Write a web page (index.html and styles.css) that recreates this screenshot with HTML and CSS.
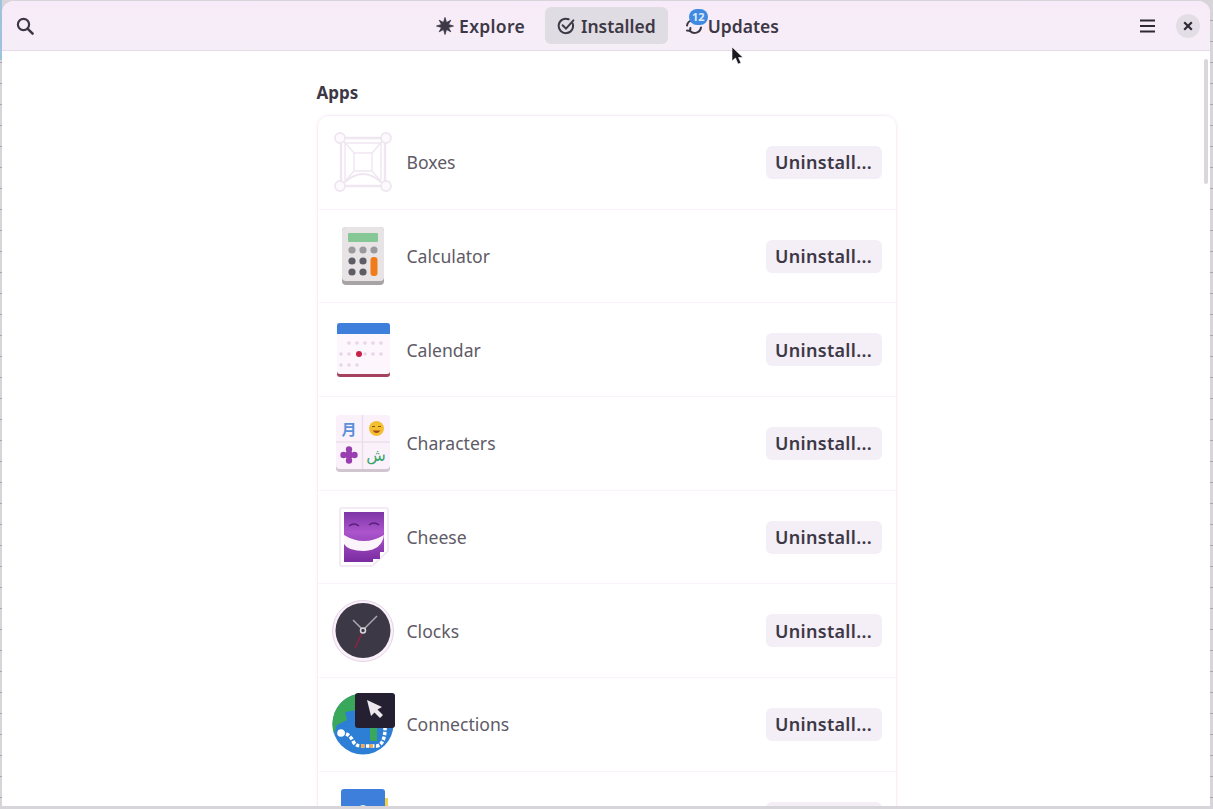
FILE: index.html
```html
<!DOCTYPE html>
<html lang="en">
<head>
    <meta charset="UTF-8">
    <meta name="viewport" content="width=device-width, initial-scale=1.0">
    <title>Software</title>
    <link rel="stylesheet" href="styles.css">
</head>
<body>
    <div class="window">
        <header class="headerbar">
            <div class="header-start">
                <svg class="icon-search" width="20" height="20" viewBox="0 0 20 20"><circle cx="8.5" cy="8.5" r="5.6" fill="none" stroke="#3d3846" stroke-width="2.2"/><path d="M12.8 12.8 17.6 17.6" stroke="#3d3846" stroke-width="2.6" stroke-linecap="round"/></svg>
            </div>
            <nav class="switcher">
                <div class="tab tab-explore">
                    <svg width="18" height="18" viewBox="0 0 18 18"><path d="M9 0.500 10.500 5.500 14.800 3.200 12.500 7.500 17.500 9 12.500 10.500 14.800 14.800 10.500 12.500 9 17.500 7.500 12.500 3.200 14.800 5.500 10.500 0.500 9 5.500 7.500 3.200 3.200 7.500 5.500Z" fill="#3d3846" stroke="#3d3846" stroke-width="0.800" stroke-linejoin="round"/></svg>
                    <span>Explore</span>
                </div>
                <div class="tab tab-active">
                    <svg width="18" height="18" viewBox="0 0 18 18" fill="none" stroke="#3d3846" stroke-width="2" stroke-linecap="round"><path d="M15.6 6.4A7.2 7.2 0 1 1 11.6 2.3"/><path d="M5.6 8.2 9 11.6 16.4 3.4"/></svg>
                    <span>Installed</span>
                </div>
                <div class="tab tab-updates">
                    <svg width="18" height="18" viewBox="0 0 18 18" fill="none" stroke="#3d3846" stroke-width="2" stroke-linecap="round"><path d="M2 8.5A6.5 6.5 0 0 1 13 5"/><path d="M16 10.5A6.5 6.5 0 0 1 5 14"/><path d="M2 13.6 5 14 5.4 11"/></svg>
                    <span>Updates</span>
                    <span class="badge">12</span>
                </div>
            </nav>
            <div class="header-end">
                <svg width="16" height="14" viewBox="0 0 16 14"><path d="M0 1.5H15M0 7H15M0 12.5H15" stroke="#2e2a35" stroke-width="2"/></svg>
                <button class="close">
                    <svg width="10" height="10" viewBox="0 0 10 10"><path d="M1.2 1.2 8.8 8.8M8.8 1.2 1.2 8.8" stroke="#2e2a35" stroke-width="2.2"/></svg>
                </button>
            </div>
        </header>
        <main class="content">
            <div class="scrollbar"></div>
            <section class="column">
                <h2>Apps</h2>
                <div class="list">
                    <div class="row">
                        <svg class="app-icon" width="64" height="64" viewBox="0 0 64 64" fill="none" stroke="#f0e6f2" stroke-width="1.4">
                            <path d="M10 8H54V56H10Z" stroke-width="2.400"/>
                            <path d="M14 13H50M14 13V50M50 13V50"/>
                            <path d="M23 23H41V41H23Z"/>
                            <path d="M10 8 23 23M54 8 41 23M10 56 23 41M54 56 41 41"/>
                            <path d="M14 52Q32 36 50 52" stroke-width="2"/>
                            <g fill="#fdfafd" stroke-width="1.800"><circle cx="9" cy="8" r="5"/><circle cx="55" cy="8" r="5"/><circle cx="9" cy="56" r="5"/><circle cx="55" cy="56" r="5"/></g>
                        </svg>
                        <span class="app-name">Boxes</span>
                        <button class="uninstall">Uninstall...</button>
                    </div>
                    <div class="row">
                        <svg class="app-icon" width="64" height="64" viewBox="0 0 64 64">
                            <rect x="11" y="3" width="42" height="58" rx="4" fill="#a8a4a6"/>
                            <rect x="11" y="3" width="42" height="54" rx="4" fill="#e8e4e6"/>
                            <rect x="17" y="9" width="30" height="9" rx="1" fill="#85c795"/>
                            <g fill="#9a9a9e"><circle cx="21" cy="26" r="3.6"/><circle cx="32" cy="26" r="3.6"/><circle cx="43" cy="26" r="3.6"/></g>
                            <g fill="#5e5c64"><circle cx="21" cy="37" r="3.6"/><circle cx="32" cy="37" r="3.6"/><circle cx="21" cy="48" r="3.6"/><circle cx="32" cy="48" r="3.6"/></g>
                            <rect x="39.500" y="33" width="7" height="19" rx="3" fill="#f07c1a"/>
                        </svg>
                        <span class="app-name">Calculator</span>
                        <button class="uninstall">Uninstall...</button>
                    </div>
                    <div class="row">
                        <svg class="app-icon" width="64" height="64" viewBox="0 0 64 64">
                            <rect x="6" y="5" width="53" height="54" rx="3" fill="#a5405f"/>
                            <rect x="6" y="5" width="53" height="51" rx="3" fill="#fdf6fc"/>
                            <path d="M6 16V8A3 3 0 0 1 9 5H56A3 3 0 0 1 59 8V16Z" fill="#3f7fdc"/>
                            <g fill="#e6d6e6"><circle cx="18" cy="25" r="1.800"/><circle cx="26" cy="25" r="1.800"/><circle cx="34" cy="25" r="1.800"/><circle cx="42" cy="25" r="1.800"/><circle cx="50" cy="25" r="1.800"/><circle cx="10" cy="36" r="1.800"/><circle cx="18" cy="36" r="1.800"/><circle cx="34" cy="36" r="1.800"/><circle cx="42" cy="36" r="1.800"/><circle cx="50" cy="36" r="1.800"/><circle cx="10" cy="47" r="1.800"/><circle cx="18" cy="47" r="1.800"/><circle cx="26" cy="47" r="1.800"/></g>
                            <circle cx="28" cy="36" r="3" fill="#c9204a"/>
                        </svg>
                        <span class="app-name">Calendar</span>
                        <button class="uninstall">Uninstall...</button>
                    </div>
                    <div class="row">
                        <svg class="app-icon" width="64" height="64" viewBox="0 0 64 64">
                            <rect x="5" y="5" width="54" height="56" rx="4" fill="#cfc6cf"/>
                            <rect x="5" y="4" width="54" height="54" rx="4" fill="#fbf1fb"/>
                            <path d="M31.500 4V58M5 31H59" stroke="#e9dfe9" stroke-width="1.500"/>
                            <text x="18" y="24" text-anchor="middle" class="glyph-cjk">月</text>
                            <circle cx="45.500" cy="17.500" r="7.500" fill="#f3bf30"/>
                            <path d="M41 15.500H44M47 15.500H50" stroke="#7a5a10" stroke-width="1.200"/>
                            <path d="M41.500 19.500H49.500Q45.500 24.500 41.500 19.500Z" fill="#a5461c"/>
                            <g fill="#9a3fb0"><circle cx="18" cy="38.500" r="3.200"/><circle cx="18" cy="49.500" r="3.200"/><circle cx="12.500" cy="44" r="3.200"/><circle cx="23.500" cy="44" r="3.200"/><rect x="15" y="41" width="6" height="6"/></g>
                            <text x="45" y="50" text-anchor="middle" class="glyph-arabic">ش</text>
                        </svg>
                        <span class="app-name">Characters</span>
                        <button class="uninstall">Uninstall...</button>
                    </div>
                    <div class="row">
                        <svg class="app-icon" width="64" height="64" viewBox="0 0 64 64">
                            <defs><linearGradient id="cheeseFill" x1="0" y1="0" x2="0" y2="1"><stop offset="0" stop-color="#7d35a6"/><stop offset="0.4" stop-color="#ac55cc"/><stop offset="1" stop-color="#7a2ba0"/></linearGradient></defs>
                            <path d="M11 3H55A2 2 0 0 1 57 5V46L41 61H11A2 2 0 0 1 9 59V5A2 2 0 0 1 11 3Z" fill="#fff" stroke="#f0e4f2" stroke-width="1.500"/>
                            <path d="M13 7H53V47H49V54H42V57H13Z" fill="url(#cheeseFill)"/>
                            <path d="M13 30Q33 42 53 30 51 45 33 46 17 46 13 39Z" fill="#fbf4fb"/>
                            <path d="M18 21Q23 17 28 21M38 20Q43 16 48 20" fill="none" stroke="#58207c" stroke-width="1.500"/>
                        </svg>
                        <span class="app-name">Cheese</span>
                        <button class="uninstall">Uninstall...</button>
                    </div>
                    <div class="row">
                        <svg class="app-icon" width="64" height="64" viewBox="0 0 64 64">
                            <circle cx="32" cy="32" r="30.500" fill="#fbf1fb" stroke="#e5d3e6" stroke-width="1"/>
                            <circle cx="32" cy="31.500" r="27.500" fill="#3d3846"/>
                            <path d="M32 31 22 21M32 31 46 17" stroke="#aaa6ae" stroke-width="1.500"/>
                            <path d="M31.500 33 24 49" stroke="#8c2340" stroke-width="1.500"/>
                            <circle cx="32" cy="31.500" r="2.500" fill="#3d3846" stroke="#ddd8de" stroke-width="1.500"/>
                        </svg>
                        <span class="app-name">Clocks</span>
                        <button class="uninstall">Uninstall...</button>
                    </div>
                    <div class="row">
                        <svg class="app-icon" width="64" height="64" viewBox="0 0 64 64">
                            <circle cx="32" cy="32" r="30.500" fill="#2c7fd4"/>
                            <path d="M1.500 32A30.500 30.500 0 0 1 26 2V18L14 20 16 28 6 33 3 42A30.500 30.500 0 0 1 1.500 32Z" fill="#3aa85a"/>
                            <path d="M39 36H46V49H39Z" fill="#3aa85a"/>
                            <path d="M10 41Q18 41 22 49 24 54 30 54H46Q54 52 54 36" fill="none" stroke="#fff" stroke-width="3.500" stroke-dasharray="3.500 1.500"/>
                            <path d="M30 54H47" stroke="#f2a84a" stroke-width="3.500" stroke-dasharray="3.500 5"/>
                            <circle cx="10" cy="41" r="3.800" fill="#fff"/>
                            <rect x="24" y="1" width="40" height="35" rx="3" fill="#241f31"/>
                            <path d="M36 8 40 24 43.500 20.500 49 26 52 23 46.500 17.500 51 15Z" fill="#ece8ee"/>
                        </svg>
                        <span class="app-name">Connections</span>
                        <button class="uninstall">Uninstall...</button>
                    </div>
                    <div class="row">
                        <svg class="app-icon" width="64" height="64" viewBox="0 0 64 64">
                            <rect x="10" y="3" width="44" height="58" rx="3" fill="#3f7fdc"/>
                            <rect x="54" y="12" width="3" height="14" fill="#f3d24a"/>
                            <circle cx="32" cy="24" r="5" fill="#e6eefa"/>
                        </svg>
                        <span class="app-name"></span>
                        <button class="uninstall" aria-label="Uninstall"></button>
                    </div>
                </div>
            </section>
        </main>
    </div>
    <svg class="pointer" width="14" height="20" viewBox="0 0 14 20"><path d="M1 1V15L4.500 12 7 18 10 17 7.500 11.500H12Z" fill="#1b1a20" stroke="#fff" stroke-width="0.600"/></svg>
</body>
</html>
```

FILE: styles.css
```css
html, body {
    height: 100%;
}
body {
    margin: 0;
    overflow: hidden;
    font-family: "Noto Sans", "Open Sans", sans-serif;
    color: #3d3846;
    background-color: #d8d5da;
    background-image:
        linear-gradient(#9fc3dc, #9fc3dc),
        repeating-linear-gradient(180deg, transparent 0 20px, #aaa6ae 20px 21px);
    background-size: 2px 60px, auto;
    background-repeat: no-repeat, repeat;
}
.window {
    height: 805px;
    margin: 1px 3px 0 2px;
    display: flex;
    flex-direction: column;
    overflow: hidden;
    border-radius: 12px 12px 0 0;
    background-color: #fff;
}
.headerbar {
    flex: none;
    height: 49px;
    display: grid;
    grid-template-columns: 1fr auto 1fr;
    align-items: center;
    padding: 0 10px 0 13px;
    background: linear-gradient(180deg, #f8ebf9, #f5eef7);
    border-bottom: 1px solid #e4dbe6;
}
.icon-search {
    display: block;
}
.switcher {
    display: flex;
    align-items: center;
    gap: 6px;
}
.tab {
    position: relative;
    height: 37px;
    display: flex;
    align-items: center;
    gap: 6px;
    padding: 0 12px;
    border-radius: 6px;
    font-size: 17.5px;
    font-weight: 600;
    color: #3d3846;
}
.tab-explore {
    gap: 5px;
    margin-right: 2px;
    letter-spacing: 0.3px;
}
.tab-active {
    background-color: #e0dce3;
}
.tab-updates {
    gap: 5px;
    margin-left: -1px;
}
.badge {
    position: absolute;
    top: 2px;
    left: 16px;
    width: 19px;
    height: 16px;
    border-radius: 8px;
    background-color: #3f8ae0;
    color: #dbe9fa;
    font-size: 11px;
    font-weight: 700;
    line-height: 16px;
    text-align: center;
}
.header-end {
    display: flex;
    align-items: center;
    justify-content: flex-end;
    gap: 20px;
}
.close {
    width: 24px;
    height: 24px;
    display: flex;
    align-items: center;
    justify-content: center;
    padding: 0;
    border: none;
    border-radius: 50%;
    background-color: #e3dee5;
}
.content {
    position: relative;
    flex: 1;
    overflow: hidden;
    display: flex;
    justify-content: center;
}
.scrollbar {
    position: absolute;
    top: 8px;
    right: 2px;
    width: 4px;
    height: 125px;
    border-radius: 2px;
    background-color: #dad6dc;
}
.column {
    width: 580px;
    margin-left: 1px;
}
h2 {
    margin: 30px 0 10px;
    font-size: 17px;
    line-height: 24px;
    font-weight: 700;
    color: #3d3846;
}
.list {
    border: 1px solid #f8eef9;
    border-radius: 12px;
    box-shadow: 0 0 3px #f6ecf7;
}
.row {
    height: 92.700px;
    display: flex;
    align-items: center;
    padding: 0 14px 0 13px;
    border-bottom: 1px solid #faf3fb;
}
.app-icon {
    flex: none;
    margin-right: 12px;
}
.app-name {
    flex: 1;
    font-size: 17.6px;
    color: #5e5a66;
}
.uninstall {
    height: 33px;
    width: 116px;
    padding: 0;
    border: none;
    border-radius: 6px;
    background-color: #f4eef6;
    font-family: inherit;
    font-size: 18px;
    font-weight: 600;
    letter-spacing: 0.3px;
    color: #3d3846;
}
.glyph-cjk {
    font-family: "Noto Sans CJK SC", sans-serif;
    font-size: 15px;
    font-weight: 700;
    fill: #5b8fd8;
}
.glyph-arabic {
    font-family: "DejaVu Sans", sans-serif;
    font-size: 16px;
    fill: #3aa76d;
}
.pointer {
    position: absolute;
    top: 46px;
    left: 731px;
}
```
